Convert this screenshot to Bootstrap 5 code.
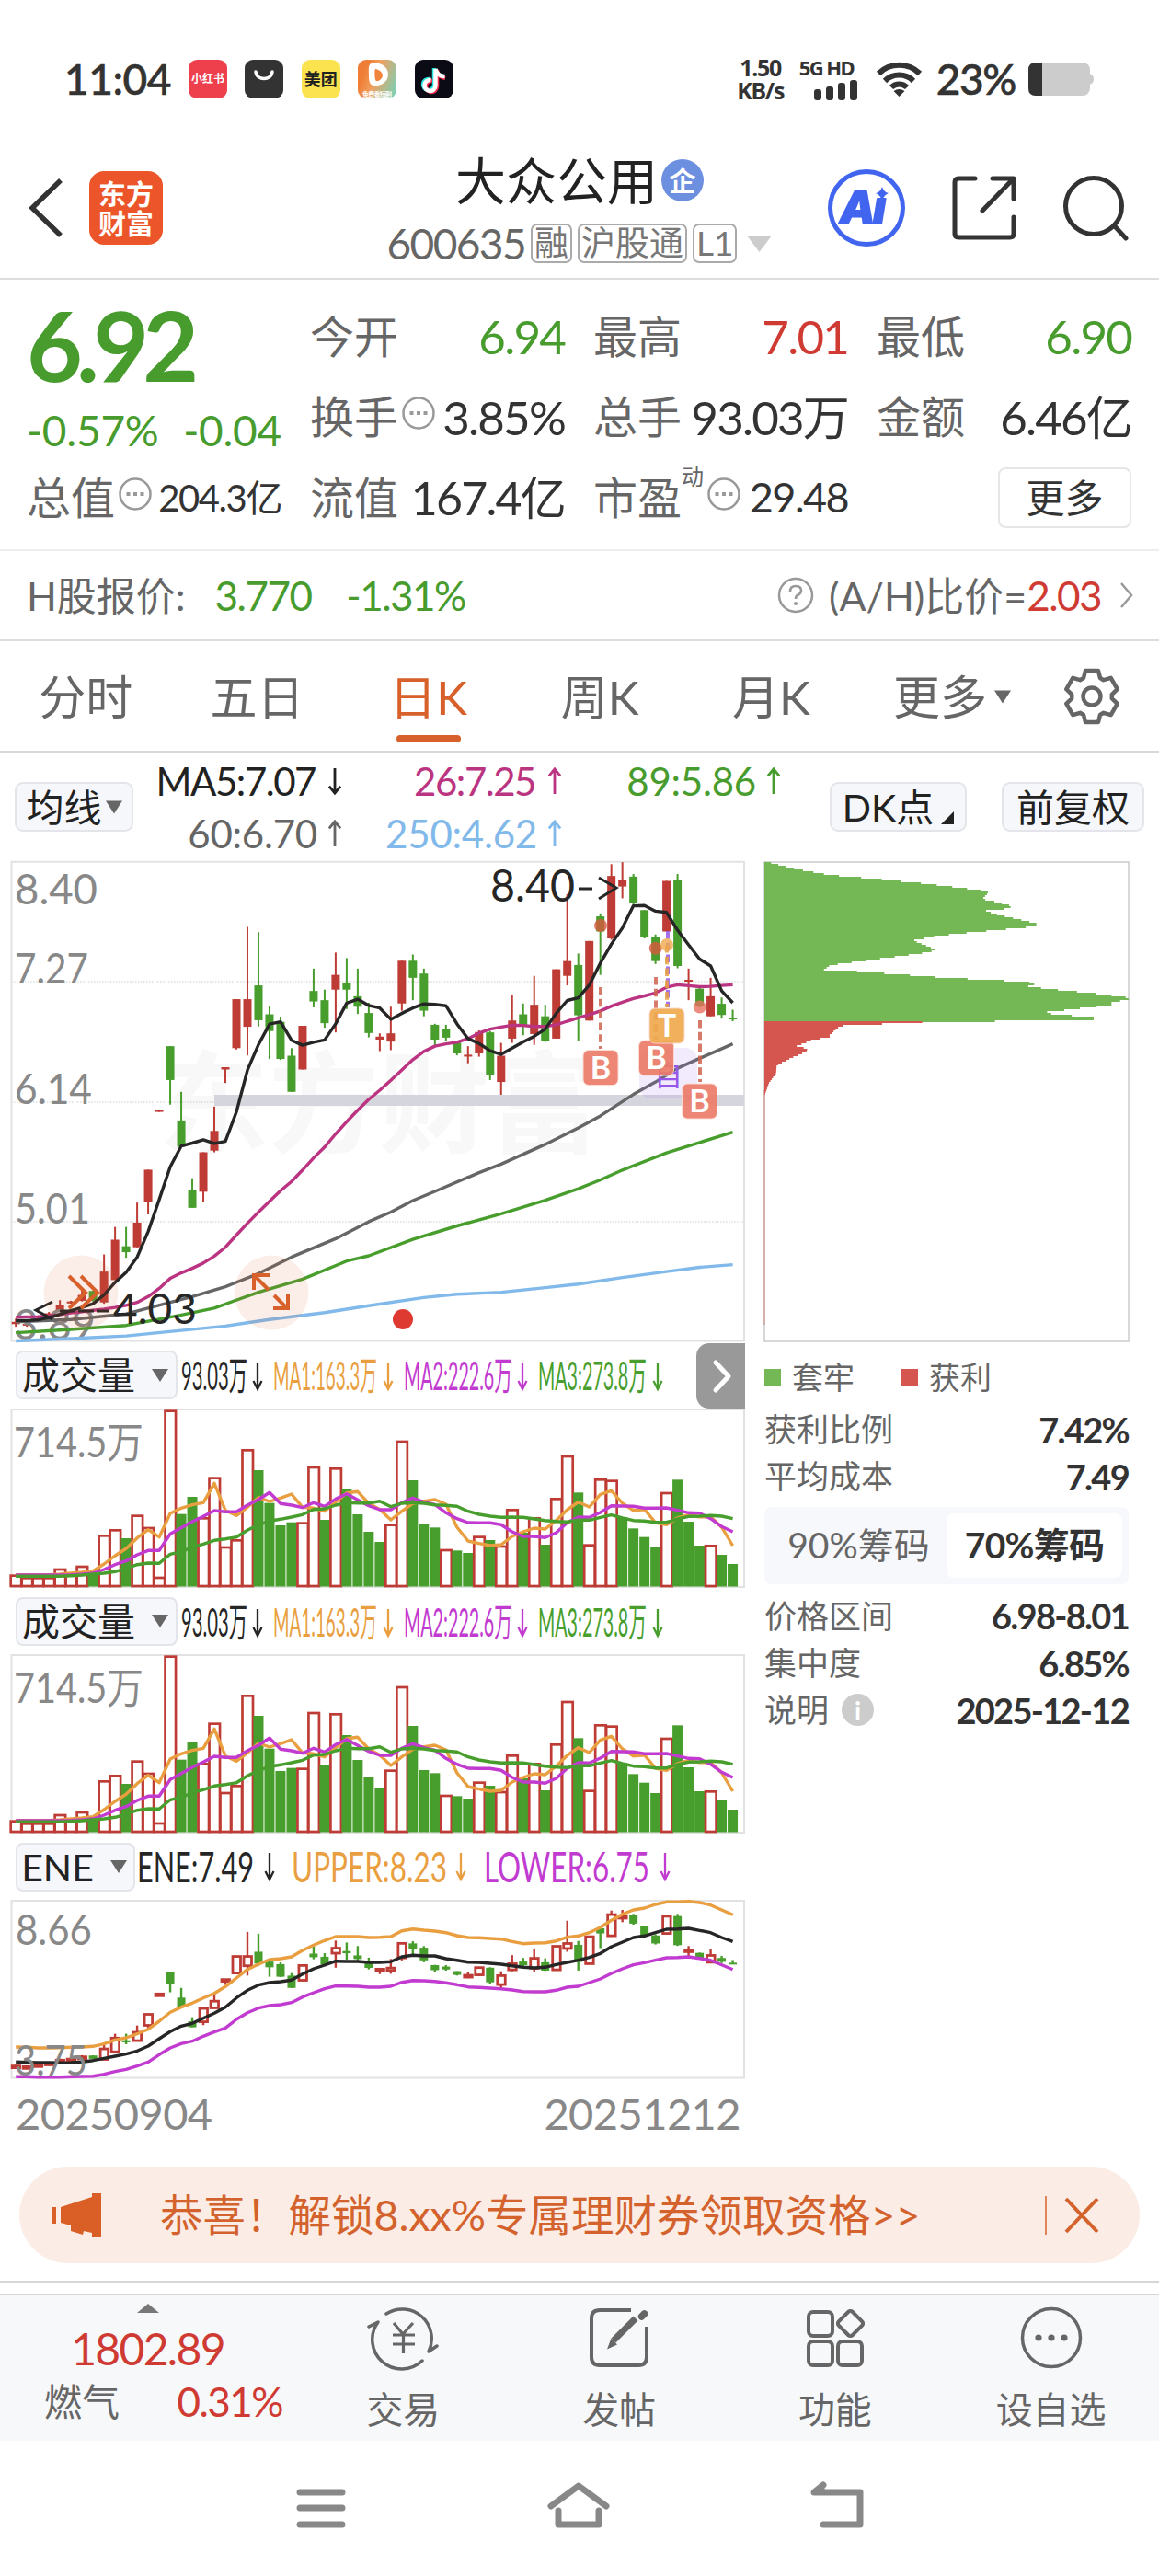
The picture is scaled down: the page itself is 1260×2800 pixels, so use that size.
<!DOCTYPE html>
<html lang="zh-CN">
<head>
    <meta charset="UTF-8">
    <meta name="viewport" content="width=device-width, initial-scale=1.0">
    <title>大众公用 600635</title>
    <link rel="stylesheet" href="https://cdn.jsdelivr.net/npm/bootstrap@5.3.0/dist/css/bootstrap.min.css">
    <style>
        body { width: 1260px; height: 2800px; overflow: hidden; background: #fff; color: #333; line-height: 1; font-family: Lato, "Noto Sans CJK SC", sans-serif; white-space: nowrap; }
        svg { display: block; flex-shrink: 0; overflow: visible; }
        .up { color: #cf3b32; }
        .down { color: #479c2d; }
        .muted { color: #666; }
        .num { letter-spacing: -.035em; }

        .status-bar { height: 150px; padding: 22px 71px 0 70px; }
        .clock { font-size: 46px; font-weight: 500; width: 135px; letter-spacing: -.01em; -webkit-text-stroke: .6px; }
        .app-icon { width: 42px; height: 42px; border-radius: 9px; margin-right: 19.4px; font-size: 15px; font-weight: 700; }
        .app-red { background: #ee3f4d; color: #fff; font-size: 12px; }
        .app-dark { background: #333; }
        .app-yellow { background: #fbe34f; color: #222; font-size: 18px; }
        .app-video { background: linear-gradient(110deg, #ef7d35 20%, #f0a060 45%, #6ed6be); }
        .app-black { background: #0b0b16; }
        .net-speed { font: 700 25px/25px "Noto Sans", sans-serif; width: 62px; letter-spacing: -.05em; }
        .net-type { font: 700 22px/20px "Noto Sans", sans-serif; letter-spacing: -.07em; }
        .battery-text { font-size: 46px; font-weight: 500; letter-spacing: -.03em; -webkit-text-stroke: .6px; }

        .app-header { height: 154px; border-bottom: 2px solid #ddd; }
        .header-side { width: 361px; }
        .brand { width: 80px; height: 80px; border-radius: 16px; background: #eb5529; color: #fff; font-size: 30px; line-height: 32px; font-weight: 700; }
        .ai-text { font: italic 800 50px Inter, sans-serif; }
        .stock-name { font-size: 55px; color: #222; }
        .corp { width: 46px; height: 46px; border-radius: 50%; background: #6d8fe0; color: #fff; font-size: 29px; font-weight: 700; }
        .stock-code { font-size: 46px; }
        .tag { height: 43px; border: 2px solid #aaa; border-radius: 7px; font-size: 37px; line-height: 37px; padding: 0 2px; margin-left: 6px; color: #777; }

        .quote { height: 295px; padding: 18px 31px 0 29px; display: grid; grid-template-columns: repeat(4, 277px); column-gap: 31px; grid-template-rows: repeat(3, 87.5px); border-bottom: 2px solid #eee; }
        .quote .cell { display: flex; align-items: center; justify-content: space-between; font-size: 51px; }
        .cell .lbl { font-size: 48px; color: #666; }
        .last-price { grid-row: span 2; }
        .price { font-size: 105px; line-height: 105px; font-weight: 700; letter-spacing: -.065em; }
        .change { font-size: 46px; letter-spacing: -.005em; }
        .more-btn { width: 145px; height: 66px; border: 2px solid #e6e6e6; border-radius: 8px; font-size: 42px; color: #333; padding: 0; }
        .h-quote { height: 98px; padding: 0 28px 0 29px; font-size: 43px; border-bottom: 2px solid #ddd; }
        .h-num { font-size: 44px; }

        .period-tabs { height: 121px; border-bottom: 2px solid #d8d8d8; font-size: 51px; color: #666; }
        .period-tabs .tab { width: 186.300px; height: 119px; display: flex; align-items: center; justify-content: center; position: relative; padding-top: 2px; }
        .tab.on { color: #d8602a; }
        .tab.on::after { content: ""; position: absolute; left: 58px; bottom: 9px; width: 70px; height: 8px; border-radius: 4px; background: #d8602a; }

        .ma-bar { height: 118px; padding: 0 16px; color: #222; }
        .pill { background: #f6f7fa; border: 2px solid #e4e5ea; border-radius: 9px; height: 54px; display: flex; align-items: center; justify-content: center; font-size: 41px; color: #222; }
        .ma-grid { display: grid; grid-template-columns: 227px 239px 238px; row-gap: 15px; font-size: 42px; line-height: 42px; }
        .ma-grid div { display: flex; justify-content: flex-end; align-items: center; gap: 13px; }
        .ma-grid .wide { letter-spacing: -.005em; gap: 11px; }

        .charts { height: 1404px; padding-left: 12px; gap: 21px; }
        .ind-bar { padding-left: 5px; position: relative; }
        .ind-bar .pill { border-radius: 8px; height: 53px; padding-right: 3px; }
        .panel-btn { position: absolute; right: 0; top: 2px; width: 53px; height: 71px; background: #999; border-radius: 14px 0 0 14px; }
        .dates { font-size: 47px; color: #888; letter-spacing: -.012em; padding: 14px 5px 0 5px; }

        .chips { width: 396px; font-size: 35px; color: #666; }
        .chips .line { height: 51.3px; display: flex; align-items: center; justify-content: space-between; }
        .chips b { font-size: 38px; font-weight: 700; color: #333; letter-spacing: -.045em; }
        .legend { height: 77px; font-size: 34px; }
        .swatch { width: 18px; height: 18px; }
        .seg { height: 84px; margin: 7px 0 9px; padding: 7px; border-radius: 8px; background: #f7f8fb; font-size: 39px; }
        .seg div { flex: 1; height: 70px; border-radius: 8px; display: flex; align-items: center; justify-content: center; }
        .seg .on { background: #fff; color: #333; font-weight: 700; letter-spacing: -.02em; }
        .info { width: 35px; height: 35px; border-radius: 50%; background: #ccc; color: #fff; font-size: 28px; font-weight: 700; }

        .promo { margin: 15px 21px 0; height: 105px; border-radius: 53px; background: #fbede5; color: #d4622d; font-size: 46.500px; padding: 0 43px 0 35px; }
        .bottom-bar { margin-top: 19px; border-top: 2px solid #d6d6d6; padding-top: 12px; }
        .bottom-inner { height: 160px; background: #f7f8fa; border-top: 2px solid #d6d6d6; color: #666; font-size: 40px; }
        .index-box { width: 321px; }
        .tool { flex: 1; padding-top: 12px; text-align: center; }
        .sys-nav { height: 146px; }
    </style>
</head>
<body>
    <svg width="0" height="0" class="position-absolute">
        <symbol id="down" viewBox="0 0 16 32"><path d="M8 1v29M1.500 22 8 30l6.500-8" fill="none" stroke="currentColor" stroke-width="3"/></symbol>
        <symbol id="up" viewBox="0 0 16 32"><path d="M8 31V2M1.500 10 8 2l6.500 8" fill="none" stroke="currentColor" stroke-width="3"/></symbol>
        <symbol id="dots" viewBox="0 0 36 36"><circle cx="18" cy="18" r="16.500" fill="none" stroke="#999" stroke-width="2.500"/><path d="M8.500 16h4v4h-4zM16 16h4v4h-4zM23.500 16h4v4h-4z" fill="#999"/></symbol>
        <symbol id="caret" viewBox="0 0 18 14"><path d="M0 0h18L9 14z" fill="currentColor"/></symbol>
    </svg>

    <div class="status-bar d-flex align-items-center">
        <span class="clock">11:04</span>
        <div class="app-icon app-red d-flex align-items-center justify-content-center">小红书</div>
        <div class="app-icon app-dark"><svg width="42" height="42"><path d="M12 13c1 10 17 10 18 0" fill="none" stroke="#fff" stroke-width="3.500" stroke-linecap="round"/></svg></div>
        <div class="app-icon app-yellow d-flex align-items-center justify-content-center">美团</div>
        <div class="app-icon app-video"><svg width="42" height="42"><path d="M15 4c10-2 18 4 18 12S25 29 17 28c-4-1-5-4-5-11S11 5 15 4z" fill="#fff"/><path d="M19 10c4 0 8 4 8 7s-4 7-7 6c-2-1-2-12-1-13z" fill="#f0843c"/><text x="5" y="40" font-size="7" font-weight="700" textLength="32" fill="#fff">免费看短剧</text></svg></div>
        <div class="app-icon app-black"><svg width="42" height="42" fill="none" stroke-width="4.500"><path d="M21 9v18a6 6 0 1 1-5-6M21 10c1 5 5 8 10 8" stroke="#25e4df"/><path d="M24 11v18a6 6 0 1 1-5-6M24 12c1 5 5 7 9 8" stroke="#f8304f"/><path d="M22.500 10v18a6 6 0 1 1-5-6M22.500 10c1 5 5 8 10 8" stroke="#fff"/></svg></div>
        <div class="ms-auto d-flex align-items-center">
            <div class="net-speed text-center">1.50<br>KB/s</div>
            <div style="width:68px;margin-left:11px">
                <div class="net-type">5G HD</div>
                <svg class="ms-auto mt-1 me-1" width="48" height="22" fill="#333"><rect y="10" width="8" height="12" rx="3"/><rect x="13" y="7" width="8" height="15" rx="3"/><rect x="26" y="3" width="8" height="19" rx="3"/><rect x="39" width="8" height="22" rx="3"/></svg>
            </div>
            <svg class="ms-3" width="49" height="38" fill="none" stroke="#333" stroke-width="6"><path d="M2 13a32 32 0 0 1 45 0M9 21a22 22 0 0 1 31 0M16 28a12 12 0 0 1 17 0"/><path d="m24.500 38-6-6q6-4 12 0z" fill="#333" stroke="none"/></svg>
            <span class="battery-text ms-3">23%</span>
            <svg style="margin-left:14px" width="71" height="36"><rect width="67" height="36" rx="8" fill="#ccc"/><path d="M66 12q5 1 5 6t-5 6z" fill="#ccc"/><path d="M15 0v36H8q-8 0-8-8V8q0-8 8-8z" fill="#333"/></svg>
        </div>
    </div>

    <div class="app-header d-flex align-items-center">
        <div class="header-side d-flex align-items-center" style="padding-left:31px">
            <svg width="66" height="66"><path d="M35 3 4 33l31 30" fill="none" stroke="#333" stroke-width="5.500"/></svg>
            <div class="brand d-flex flex-column align-items-center justify-content-center"><span>东方</span><span>财富</span></div>
        </div>
        <div class="flex-grow-1 d-flex flex-column align-items-center" style="padding-top:4px">
            <div class="d-flex align-items-center" style="margin-bottom:18px">
                <span class="stock-name">大众公用</span>
                <span class="corp d-flex align-items-center justify-content-center ms-1">企</span>
            </div>
            <div class="d-flex align-items-center muted">
                <span class="stock-code num">600635</span>
                <span class="tag">融</span><span class="tag">沪股通</span><span class="tag">L1</span>
                <svg width="27" height="18" style="margin-left:11px"><path d="M0 0h27L13.500 18z" fill="#ccc"/></svg>
            </div>
        </div>
        <div class="header-side d-flex align-items-center">
            <svg width="86" height="86"><circle cx="43" cy="43" r="39.500" fill="none" stroke="#4265f0" stroke-width="5"/><text class="ai-text" x="14" y="60" fill="#4265f0" stroke="#4265f0" stroke-width="2" stroke-linejoin="round">A<tspan x="50" y="60">ı</tspan></text><path d="M60 20q2 6 7 7-5 2-7 8-2-6-7-8 5-1 7-7z" fill="#4265f0"/></svg>
            <svg width="70" height="70" style="margin-left:50px" fill="none" stroke="#333" stroke-width="5" stroke-linecap="round" stroke-linejoin="round"><path d="M25 3H7q-4 0-4 4v56q0 4 4 4h56q4 0 4-4V45M44 3h23v22M66 4 33 38"/></svg>
            <svg width="70" height="72" style="margin-left:51px" fill="none" stroke="#333" stroke-width="5" stroke-linecap="round"><circle cx="33" cy="34" r="30.500"/><path d="m55 55 13 14"/></svg>
        </div>
    </div>

    <div class="quote">
        <div class="last-price down">
            <div class="price">6.92</div>
            <div class="change d-flex justify-content-between" style="margin-top:18px"><span>-0.57%</span><span>-0.04</span></div>
        </div>
        <div class="cell"><span class="lbl">今开</span><span class="num down">6.94</span></div>
        <div class="cell"><span class="lbl">最高</span><span class="num up">7.01</span></div>
        <div class="cell"><span class="lbl">最低</span><span class="num down">6.90</span></div>
        <div class="cell"><span class="lbl d-flex align-items-center">换手<svg class="ms-1" width="36" height="36" style="margin-top:-8px"><use href="#dots"/></svg></span><span class="num">3.85%</span></div>
        <div class="cell"><span class="lbl">总手</span><span class="num">93.03万</span></div>
        <div class="cell"><span class="lbl">金额</span><span class="num">6.46亿</span></div>
        <div class="cell"><span class="lbl d-flex align-items-center">总值<svg class="ms-1" width="36" height="36" style="margin-top:-8px"><use href="#dots"/></svg></span><span class="num" style="font-size:40px">204.3亿</span></div>
        <div class="cell"><span class="lbl">流值</span><span class="num" style="font-size:50px">167.4亿</span></div>
        <div class="cell"><span class="lbl d-flex align-items-center">市盈<span class="align-self-start" style="font-size:24px;margin-top:-11px">动</span><svg class="ms-1" width="36" height="36" style="margin-top:-8px"><use href="#dots"/></svg></span><span class="num" style="font-size:45px">29.48</span></div>
        <div class="cell justify-content-end"><button class="btn more-btn">更多</button></div>
    </div>

    <div class="h-quote d-flex align-items-center muted">
        <span>H股报价:</span>
        <span class="h-num num down" style="margin-left:32px">3.770</span>
        <span class="h-num num down" style="margin-left:38px">-1.31%</span>
        <svg class="ms-auto me-3" width="40" height="40"><circle cx="20" cy="20" r="18" fill="none" stroke="#999" stroke-width="2.500"/><path d="M14 16q0-6 6-6t6 5q0 3-4 5-2 1-2 4" fill="none" stroke="#999" stroke-width="2.600"/><circle cx="20" cy="29" r="2" fill="#999"/></svg>
        <span>(A/H)比价=</span><span class="h-num num up">2.03</span>
        <svg style="margin-left:21px" width="14" height="28"><path d="m1 1 11 13L1 27" fill="none" stroke="#999" stroke-width="2.500"/></svg>
    </div>

    <div class="period-tabs d-flex align-items-center">
        <div class="tab">分时</div>
        <div class="tab">五日</div>
        <div class="tab on">日K</div>
        <div class="tab">周K</div>
        <div class="tab">月K</div>
        <div class="tab" style="width:207px">更多<svg class="ms-2" width="18" height="15"><use href="#caret"/></svg></div>
        <svg class="ms-3" width="66" height="66" viewBox="-33 -33 66 66" fill="none" stroke="#666" stroke-width="4.500" stroke-linejoin="round"><path d="M-9-20-7-28H7L9-20 12.800-17.800 20.700-20.100 27.700-7.900 21.800-2.200V2.200L27.700 7.900 20.700 20.100 12.800 17.800 9 20 7 28H-7L-9 20-12.800 17.800-20.700 20.100-27.700 7.900-21.800 2.200V-2.200L-27.700-7.900-20.700-20.100-12.800-17.800z"/><circle r="9.500"/></svg>
    </div>

    <div class="ma-bar d-flex align-items-center">
        <div class="pill" style="width:129px">均线<svg width="18" height="15" class="muted ms-1"><use href="#caret"/></svg></div>
        <div class="ma-grid num">
            <div>MA5:7.07<svg width="16" height="30"><use href="#down"/></svg></div>
            <div style="color:#bb3481">26:7.25<svg width="16" height="30"><use href="#up"/></svg></div>
            <div class="down wide">89:5.86<svg width="16" height="30"><use href="#up"/></svg></div>
            <div class="muted wide">60:6.70<svg width="16" height="30"><use href="#up"/></svg></div>
            <div class="wide" style="color:#81b9ea">250:4.62<svg width="16" height="30"><use href="#up"/></svg></div>
        </div>
        <div class="pill ms-auto" style="width:149px">DK点<svg width="14" height="14" class="ms-2 mt-4"><path d="M14 0v14H0z" fill="#222"/></svg></div>
        <div class="pill" style="width:155px;margin-left:38px">前复权</div>
    </div>

    <div class="charts d-flex">
        <div style="width:798px">
            <svg id="kline" width="798" height="522" viewBox="12 936 798 522"></svg>
            <div class="ind-bar d-flex align-items-center" style="height:73px">
                <div class="pill" style="width:176px">成交量<svg width="18" height="14" class="muted" style="margin-left:18px"><use href="#caret"/></svg></div>
                <svg class="vol-text" width="545" height="73" viewBox="193 0 545 73"></svg>
                <div class="panel-btn"><svg width="53" height="71"><path d="m21 21 14 15-14 15" fill="none" stroke="#fff" stroke-width="5" stroke-linecap="round" stroke-linejoin="round"/></svg></div>
            </div>
            <svg class="volume" width="798" height="195" viewBox="12 1531 798 195"></svg>
            <div class="ind-bar d-flex align-items-center" style="height:72px">
                <div class="pill" style="width:176px">成交量<svg width="18" height="14" class="muted" style="margin-left:18px"><use href="#caret"/></svg></div>
                <svg class="vol-text" width="545" height="73" viewBox="193 0 545 73"></svg>
            </div>
            <svg class="volume" width="798" height="195" viewBox="12 1531 798 195"></svg>
            <div class="ind-bar d-flex align-items-center" style="height:72px">
                <div class="pill" style="width:130px">ENE<svg width="18" height="14" class="muted" style="margin-left:18px"><use href="#caret"/></svg></div>
                <svg id="eneText" width="590" height="72" viewBox="147 0 590 72"></svg>
            </div>
            <svg id="ene" width="798" height="195" viewBox="12 2065 798 195"></svg>
            <div class="dates d-flex justify-content-between"><span>20250904</span><span>20251212</span></div>
        </div>

        <div class="chips">
            <svg id="dist" width="396" height="522" viewBox="831 936 396 522"></svg>
            <div class="legend d-flex align-items-center">
                <span class="swatch" style="background:#74b856"></span><span style="margin-left:12px">套牢</span>
                <span class="swatch" style="background:#d5564e;margin-left:51px"></span><span style="margin-left:12px">获利</span>
            </div>
            <div class="line" style="margin-top:-7px"><span>获利比例</span><b>7.42%</b></div>
            <div class="line"><span>平均成本</span><b>7.49</b></div>
            <div class="seg d-flex"><div>90%筹码</div><div class="on">70%筹码</div></div>
            <div class="line"><span>价格区间</span><b>6.98-8.01</b></div>
            <div class="line"><span>集中度</span><b>6.85%</b></div>
            <div class="line"><span class="d-flex align-items-center">说明<i class="info d-flex align-items-center justify-content-center fst-normal" style="margin-left:14px">i</i></span><b>2025-12-12</b></div>
        </div>
    </div>

    <div class="promo d-flex align-items-center">
        <svg width="55" height="48" fill="#d95f27"><path d="M0 15h5v18H0zM10 15 44 4V0h10v48H44v-5l-9-2-1 4-13-4v-6l-11-3z"/></svg>
        <span style="margin-left:63px">恭喜！解锁8.xx%专属理财券领取资格&gt;&gt;</span>
        <svg class="ms-auto" width="60" height="44" fill="none" stroke="#d4622d"><path d="M1 1v42" stroke-width="1.500"/><path d="m23 4 34 36M57 4 23 40" stroke-width="4"/></svg>
    </div>

    <div class="bottom-bar">
        <div class="bottom-inner d-flex">
            <div class="index-box text-center">
                <svg class="mx-auto" width="24" height="10" style="margin-top:9px"><path d="M12 0l12 10H0z" fill="#777"/></svg>
                <div class="up num" style="font-size:48px;margin-top:15px">1802.89</div>
                <div class="d-flex align-items-center justify-content-between" style="padding:0 14px 0 48px;margin-top:11px;font-size:41px"><span>燃气</span><span class="up num" style="font-size:44px">0.31%</span></div>
            </div>
            <div class="tool">
                <svg class="mx-auto mb-4" width="76" height="68" fill="none" stroke="#666" stroke-width="3.500" stroke-linecap="round" stroke-linejoin="round"><path d="M20 8A32 32 0 0 1 66 49l9-6M1 22l10-5A32 32 0 0 0 59 59"/><path d="m28 18 10 12 11-12M38.500 30v21M27 31h24M27 41h24" stroke-width="3.200" stroke-linecap="butt"/></svg>
                <div>交易</div>
            </div>
            <div class="tool">
                <svg class="mx-auto mb-4" width="66" height="68" fill="none" stroke="#666" stroke-width="4"><path d="M46 4H12q-9 0-9 9v42q0 9 9 9h42q9 0 9-9V22"/><path d="m57.500 11 3-3" stroke-width="7.500" stroke-linecap="round"/><path d="M51 13 27 37" stroke-width="7"/><path d="m24.500 34.500-4.500 12 11-5z" fill="#666" stroke="none"/></svg>
                <div>发帖</div>
            </div>
            <div class="tool">
                <svg class="mx-auto mb-4" width="64" height="68" fill="none" stroke="#666" stroke-width="4"><rect x="3" y="6" width="26" height="26" rx="5"/><rect x="3" y="38" width="26" height="26" rx="5"/><rect x="35" y="38" width="26" height="26" rx="5"/><rect x="38" y="8" width="21" height="21" rx="3" transform="rotate(45 48.500 18.500)"/></svg>
                <div>功能</div>
            </div>
            <div class="tool">
                <svg class="mx-auto mb-4" width="68" height="68"><circle cx="34" cy="34" r="31.500" fill="none" stroke="#666" stroke-width="3.500"/><circle cx="20" cy="34" r="3.600" fill="#666"/><circle cx="34" cy="34" r="3.600" fill="#666"/><circle cx="48" cy="34" r="3.600" fill="#666"/></svg>
                <div>设自选</div>
            </div>
        </div>
    </div>

    <div class="sys-nav d-flex justify-content-center" style="padding-top:44px">
        <svg width="54" height="52" stroke="#888" stroke-width="7" stroke-linecap="round"><path d="M4 12h46M4 29h46M4 47h46"/></svg>
        <svg width="70" height="52" style="margin:0 217px 0 218px" fill="none" stroke="#888" stroke-width="7" stroke-linecap="round" stroke-linejoin="round"><path d="M5 27 35 5l30 22M13 32v15h44V32"/></svg>
        <svg width="58" height="52" fill="none" stroke="#888" stroke-width="7" stroke-linecap="round" stroke-linejoin="round"><path d="M14 47h40V12H4l10-8"/><path d="m14 4-10 8h10z" fill="#888" stroke-width="3"/></svg>
    </div>

    <script src="https://cdn.jsdelivr.net/npm/bootstrap@5.3.0/dist/js/bootstrap.bundle.min.js"></script>
    <script>
        const RED = "#be3c35", GREEN = "#489e2d", ORANGE = "#e99f40", PURPLE = "#c23bd0", BLACK = "#262626"
        const x = i => 17.2 + i * 11.99

        // high, body top, body bottom, low in chart units; negative high marks a falling day
        const candles = [
            [1437,1447,1454,1462],[1445,1453,1457,1462],[1432,1436,1442,1447],[1417,1421,1429,1433],[1381,1395,1415,1418],[1383,1385,1391,1392],[1350,1365,1383,1385],[-1352,1353,1383,1385],
            [1242,1294,1388,1392],[1158,1197,1320,1320],[-1158,1217,1235,1252],[1084,1145,1220,1220],[984,984,1083,1120],[801,801,808,808],[-608,608,711,786],[-747,834,914,914],
            [-1010,1047,1100,1100],[931,931,1051,1081],[792,866,926,931],[672,672,679,720],[465,465,614,618],[245,465,549,636],[-261,423,529,548],[-485,511,562,647],
            [-518,534,647,650],[-614,637,747,747],[546,546,679,679],[-372,440,472,490],[-436,468,538,552],[323,391,436,566],[-340,417,436,495],[-372,456,488,510],
            [-476,507,568,581],[569,579,588,623],[488,569,594,620],[348,348,478,500],[-329,348,400,468],[-372,387,500,517],[-540,543,588,605],[-543,556,582,592],
            [-597,597,630,636],[608,634,637,660],[560,565,630,640],[-562,566,697,711],[598,637,717,756],[453,530,585,598],[-478,511,543,575],[394,482,571,604],
            [-482,517,592,595],[374,374,585,585],[145,349,394,423],[-326,361,514,592],[288,288,530,530],[-204,213,259,391],[54,90,280,284],[48,103,122,158],
            [-84,92,171,180],[-194,194,277,280],[-268,277,349,358],[105,105,259,259],[-84,103,364,371],[372,406,410,468],[-430,433,485,490],[400,456,517,517],
            [-460,479,513,524],[-497,521,525,532]
        ]
        const ma5 = [1443,1443,1441,1434,1424,1413,1403,1392,1365,1327,1296,1250,1172,1075,975,912,903,893,904,898,808,681,603,541,534,590,605,596,589,540,477,465,484,492,526,508,492,479,481,485,540,585,600,622,633,614,595,578,556,508,469,461,422,355,297,248,181,180,197,201,255,300,343,364,440,476]
        const ma26 = [1433,1432,1431,1429,1425,1420,1416,1412,1408,1403,1397,1388,1370,1345,1315,1298,1284,1268,1247,1220,1183,1147,1113,1080,1048,1020,985,948,915,875,838,803,770,742,712,680,649,624,608,601,596,585,568,556,550,544,545,548,548,543,532,522,512,501,486,474,463,455,446,429,421,424,427,426,423,421]
        const ma60 = [[0,1447],[5,1440],[10,1423],[16,1370],[19,1340],[22,1300],[25,1250],[29,1194],[32,1142],[34,1113],[36,1078],[38,1050],[42,993],[44,967],[48,907],[51,857],[53,820],[56,755],[58,717],[60,675],[62,645],[65,601]]
        const ma89 = [[0,1480],[5,1470],[10,1458],[15,1426],[18,1405],[22,1357],[26,1317],[30,1262],[32,1246],[36,1196],[40,1155],[44,1118],[48,1077],[51,1042],[53,1015],[55,985],[59,933],[62,901],[65,870]]
        const ma250 = [[0,1505],[5,1498],[10,1490],[15,1473],[19,1460],[23,1440],[28,1419],[32,1398],[37,1373],[40,1363],[44,1357],[48,1343],[51,1332],[55,1312],[59,1294],[62,1281],[65,1273]]

        // column tops, negative for a falling day
        const volumes = [785,793,793,793,765,778,756,-775,655,637,-666,590,630,792,248,-587,-531,598,467,693,670,376,-444,-551,-624,-614,614,432,-606,436,-507,-588,-645,-678,620,348,-477,-621,-631,702,-706,-714,659,-672,690,571,-648,598,-687,535,396,-517,686,472,476,-598,-634,-662,-696,516,-475,-612,-690,688,-720,-750]
        const volMa1 = [785,785,785,785,783,780,777,773,750,723,700,665,638,662,585,568,557,550,487,575,592,565,533,546,535,522,565,568,578,548,518,514,552,572,606,578,553,545,540,555,630,675,683,690,687,660,645,633,636,608,573,548,564,523,511,552,575,572,615,622,600,590,596,596,630,690]
        const volMa2 = [786,786,786,786,786,785,783,780,768,752,740,720,706,706,652,632,612,595,576,580,580,558,540,517,553,558,566,550,562,538,521,541,560,573,573,550,535,548,556,583,602,615,616,616,622,645,660,660,664,648,615,597,598,582,560,561,562,568,568,567,575,583,584,602,628,645]
        const volMa3 = [790,790,790,790,790,788,786,783,780,775,765,752,747,748,718,710,695,685,673,668,662,640,622,610,604,597,589,572,570,558,550,551,551,545,563,552,550,552,557,559,562,578,588,594,598,597,598,603,608,611,613,607,607,598,590,600,608,610,614,614,603,595,594,592,594,602]

        const eneUpper = [735,736,738,738,737,736,735,733,725,712,705,692,677,651,622,605,592,575,560,538,510,482,465,450,447,441,420,403,388,375,375,375,378,377,375,356,350,354,357,362,372,378,379,381,383,391,398,396,395,389,377,373,362,345,322,302,288,282,270,262,262,260,264,272,288,304]
        const eneMid = [784,785,786,786,787,786,784,779,772,765,758,748,732,708,685,667,658,641,625,605,575,550,533,525,522,517,497,480,468,455,456,456,459,459,457,441,436,438,438,447,452,458,459,462,465,470,475,477,475,466,459,452,443,430,408,393,378,373,362,351,350,348,355,362,378,391]
        const eneLower = [832,832,833,833,833,832,831,830,824,815,808,797,784,760,738,724,716,700,686,673,645,623,608,600,597,590,572,558,545,536,536,537,540,540,537,524,518,519,521,526,532,539,541,543,545,549,554,555,555,550,540,537,525,513,495,480,467,460,452,444,443,441,446,452,467,482]

        const yK = v => 920 + v / 2.8
        const yV = v => 1450 + v / 3
        const yE = v => 1980 + v / 3

        function line(data, y, color, w = 3.4) {
            const pts = data.map((d, i) => Array.isArray(d) ? [x(d[0]), y(d[1])] : [x(i), y(d)])
            return `<polyline points="${pts.map(p => p.map(n => n.toFixed(1)).join()).join(" ")}" fill="none" stroke="${color}" stroke-width="${w}" stroke-linejoin="round"/>`
        }
        function rect(l, t, w, h, fill, more = "") {
            return `<rect x="${l}" y="${t}" width="${w}" height="${h}" fill="${fill}" ${more}/>`
        }
        function text(l, base, size, width, color, str) {
            return `<text class="fit" data-x="${l}" data-y="${base}" data-w="${width}" font-size="${size}" fill="${color}">${str}</text>`
        }
        function frame(t, b) {
            return `<path d="M12.500 ${t}H809V${b}H12.500z" fill="none" stroke="#e2e2e2" stroke-width="2"/>`
        }
        function arrow(l, t, color) {
            return `<path d="M${l + 5} ${t}v29M${l + .5} ${t + 20}l4.500 9 4.500-9" fill="none" stroke="${color}" stroke-width="2.300"/>`
        }
        function marker(l, t, ch, fill) {
            return rect(l, t, 38, 38, fill, 'rx="6" opacity=".92" stroke="#fbd8cf" stroke-width="1"') +
                `<text x="${l + 19}" y="${t + 31}" font-size="34" font-weight="700" fill="#fff" text-anchor="middle">${ch}</text>`
        }
        function dashes(l, t, b, color) {
            return `<path d="M${l} ${t}V${b}" stroke="${color}" stroke-width="4" stroke-dasharray="8.500 4.300" opacity=".85"/>`
        }
        // squeeze labels to their column width
        function fitTexts() {
            document.querySelectorAll(".fit").forEach(t => {
                const k = t.dataset.w / t.getComputedTextLength()
                t.setAttribute("transform", `translate(${t.dataset.x} ${t.dataset.y}) scale(${k.toFixed(4)} 1)`)
            })
        }

        function drawKline() {
            let s = `<text x="172" y="1244" font-size="120" font-weight="700" fill="#f8f8f8">东方财富</text>`
            s += [1067, 1198, 1328].map(y => `<path d="M12 ${y}H809" stroke="#ccc" stroke-dasharray="1.500 1.500"/>`).join("")
            s += frame(936.8, 1457.5)
            s += rect(233, 1190, 576, 12, "#d5d6dd")
            candles.forEach(([h, t, b, l], i) => {
                const c = h < 0 ? GREEN : RED
                s += rect(x(i) - 1, yK(Math.abs(h)), 2, (l - Math.abs(h)) / 2.8, c) + rect(x(i) - 4.5, yK(t), 9, Math.max(2, (b - t) / 2.8), c)
            })
            s += text(16, 982.5, 47, 90, "#888", "8.40") + text(16, 1069, 47, 80, "#888", "7.27") + text(16, 1200, 47, 84, "#888", "6.14") + text(16, 1330, 47, 82, "#888", "5.01") + text(15, 1456, 47, 89, "#888", "3.89")
            s += line(ma250, yK, "#81b9ea") + line(ma89, yK, GREEN) + line(ma60, yK, "#666") + line(ma26, yK, "#bb3481") + line(ma5, yK, BLACK)
            s += text(533, 980, 48, 92, BLACK, "8.40") + `<path d="M629 966h15M651 954l19 11-19 12M57 1415 39 1424l18 10M65 1425h17M85 1425h17M105 1425h14" fill="none" stroke="${BLACK}" stroke-width="3"/>`
            s += text(123, 1439, 47, 91, BLACK, "4.03")
            s += `<circle cx="88" cy="1405" r="40.500" fill="#d8602a" opacity=".11"/><circle cx="295" cy="1405" r="40.500" fill="#d8602a" opacity=".11"/>`
            s += `<path d="m75 1387 18 18-18 17M88 1387l18 18-18 17M276 1402v-16h17M277 1387l15 15M297 1422h16v-15M298 1408l14 14" fill="none" stroke="#d8602a" stroke-width="4"/>`
            s += `<circle cx="438" cy="1434" r="11" fill="#de3a32"/>`
            // trade markers
            s += rect(695, 1139, 63, 55, "#a06ef0", 'rx="13" opacity=".14"')
            s += `<text x="711" y="1180" font-size="31" fill="#9558e8">自</text>`
            s += dashes(653, 1073, 1140, "#d0644f") + dashes(713, 1062, 1130, "#d0644f") + dashes(726, 1012, 1095, "#9558e8") + dashes(725, 1027, 1095, "#e99f40") + dashes(761, 1109, 1176, "#d0644f")
            s += [[653, 1006, "#d9593f"], [712.7, 1030.7, "#d9593f"], [725, 1027, "#f0aa4f"], [760.7, 1094.6, "#e8705f"]].map(c => `<circle cx="${c[0]}" cy="${c[1]}" r="7" fill="${c[2]}" opacity=".8"/>`).join("")
            s += marker(634, 1141.5, "B", "#ec7c69") + marker(694.5, 1131, "B", "#ec7c69") + marker(706, 1096, "T", "#f0aa4f") + marker(741.5, 1178, "B", "#ec7c69")
            document.querySelector("#kline").innerHTML = s
        }

        function drawVolume(el) {
            let s = frame(1532, 1725)
            volumes.forEach((v, i) => {
                const t = yV(Math.abs(v)), h = 1724.5 - t
                s += v < 0 ? rect(x(i) - 5.5, t, 11, h, GREEN) : rect(x(i) - 5.5, t + 1, 11.5, h - 1.5, "#fff", `stroke="${RED}" stroke-width="2.700"`)
            })
            s += text(15, 1584, 46, 141, "#888", "714.5万")
            s += line(volMa1, yV, ORANGE) + line(volMa2, yV, PURPLE) + line(volMa3, yV, GREEN)
            el.innerHTML = s
        }

        function drawVolText(el) {
            el.innerHTML = [[197, 72, "93.03万", BLACK, 275], [297, 113, "MA1:163.3万", ORANGE, 417], [439, 118, "MA2:222.6万", PURPLE, 563], [585, 118, "MA3:273.8万", GREEN, 710]]
                .map(t => text(t[0], 53, 43, t[1], t[3], t[2]) + arrow(t[4], 23, t[3])).join("")
        }

        function drawEne() {
            let s = frame(2066, 2258.5)
            const y = v => yE(270.5 + v * .3638)
            candles.forEach(([h, t, b, l], i) => {
                const c = h < 0 ? GREEN : RED, hi = y(Math.abs(h)), bh = Math.max(2, y(b) - y(t))
                s += rect(x(i) - 1.2, hi, 2.4, y(l) - hi, c)
                s += h < 0 ? rect(x(i) - 4.5, y(t), 9, bh, c) : rect(x(i) - 4, y(t), 8.500, bh, "#fff", `stroke="${c}" stroke-width="2.800"`)
            })
            s += line(eneUpper, yE, ORANGE) + line(eneMid, yE, BLACK) + line(eneLower, yE, PURPLE)
            s += text(17, 2114, 46, 83, "#888", "8.66") + text(16, 2256, 46, 79, "#888", "3.75")
            document.querySelector("#ene").innerHTML = s
            document.querySelector("#eneText").innerHTML = [[149, 127, "ENE:7.49", BLACK, 288], [317, 169, "UPPER:8.23", ORANGE, 496], [526, 180, "LOWER:6.75", PURPLE, 718]]
                .map(t => text(t[0], 53, 46, t[1], t[3], t[2]) + arrow(t[4], 21, t[3])).join("")
        }

        // chip distribution: [width edge, y] outline, drawn as 2px rows
        const trapped = [[115,48],[165,60],[222,71],[308,85],[437,95],[608,110],[735,124],[822,135],[822,140],[803,158],[845,166],[896,178],[896,186],[812,194],[856,206],[928,221],[980,232],[980,241],[865,251],[750,261],[658,270],[577,284],[615,298],[656,313],[618,321],[540,331],[421,345],[308,359],[287,373],[357,376],[516,386],[674,397],[867,406],[973,413],[973,419],[950,424],[1035,433],[1190,447],[1281,458],[1281,464],[1225,472],[1225,480],[1135,489],[1053,498],[990,504],[1110,514],[1167,518],[1167,524],[845,527],[845,532]]
        const profit = [[608,532],[608,536],[362,539],[330,550],[306,571],[306,577],[245,588],[198,605],[232,613],[232,621],[183,640],[133,663],[131,688],[108,717],[93,757]]

        function rows(points, color) {
            let s = ""
            for (let v = points[0][1]; v < points.at(-1)[1]; v += 5.6) {
                const k = points.findIndex(p => p[1] > v), a = points[k - 1], b = points[k]
                const edge = a[0] + (b[0] - a[0]) * (v - a[1]) / (b[1] - a[1])
                s += rect(831, Math.round(yK(v)), (edge - 93) / 3, 2, color)
            }
            return s
        }
        function drawDist() {
            document.querySelector("#dist").innerHTML = `<path d="M831 937H1227V1458H831z" fill="none" stroke="#ccc" stroke-width="1.500"/><path d="M831 1185V1440" stroke="#d08a85" stroke-width="1"/>` + rows(trapped, "#74b856") + rows(profit, "#d5564e")
        }

        drawKline()
        document.querySelectorAll(".volume").forEach(drawVolume)
        document.querySelectorAll(".vol-text").forEach(drawVolText)
        drawEne()
        drawDist()
        fitTexts()
    </script>
</body>
</html>
